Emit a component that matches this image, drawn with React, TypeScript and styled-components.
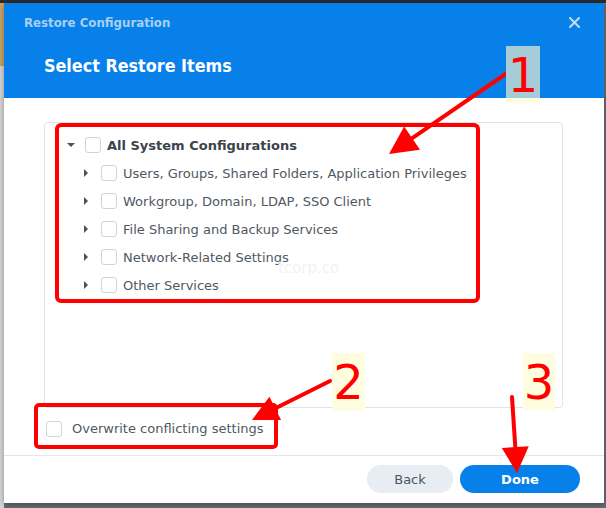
import React from "react";
import styled, { createGlobalStyle } from "styled-components";

const GlobalStyle = createGlobalStyle`
  html, body { margin: 0; padding: 0; }
  body {
    width: 606px;
    height: 508px;
    overflow: hidden;
    background: #4a4d50;
    font-family: "DejaVu Sans", Verdana, sans-serif;
  }
`;

const Page = styled.div`
  position: relative;
  width: 606px;
  height: 508px;
  box-sizing: border-box;
  padding: 3px 2px 5px 4px;
  background:
    linear-gradient(to bottom, #2b2b2b 0 3px, transparent 3px),
    linear-gradient(to right, #c9a464 0 4px, transparent 4px) 0 0 / 100% 66px no-repeat,
    linear-gradient(to right, #d6d6d6 0 4px, #6a7078 4px);
`;

const Dialog = styled.div`
  width: 600px;
  height: 500px;
  background: #ffffff;
  display: flex;
  flex-direction: column;
  box-shadow: 0 2px 6px rgba(0, 0, 0, 0.35);
`;

const Header = styled.div`
  height: 95px;
  background: #0780ea;
  display: flex;
  flex-direction: column;
  padding: 0 24px 0 20px;
`;

const TitleRow = styled.div`
  height: 38px;
  display: flex;
  align-items: center;
  justify-content: space-between;
`;

const Title = styled.div`
  font-family: "DejaVu Sans Condensed", "DejaVu Sans", sans-serif;
  font-stretch: condensed;
  font-weight: bold;
  font-size: 13.1px;
  color: #a8d0f5;
`;

const Close = styled.svg`
  width: 11px;
  height: 11px;
  display: block;
`;

const Heading = styled.div`
  margin-top: 13px;
  padding-left: 20px;
  height: 24px;
  line-height: 24px;
  font-family: "DejaVu Sans Condensed", "DejaVu Sans", sans-serif;
  font-stretch: condensed;
  font-weight: bold;
  font-size: 17.8px;
  color: #ffffff;
`;

const Body = styled.div`
  flex: 1;
  padding: 24px 41px 0 40px;
  display: flex;
  flex-direction: column;
`;

const TreeBox = styled.div`
  position: relative;
  height: 286px;
  box-sizing: border-box;
  border: 1px solid #dfe4ea;
  border-radius: 4px;
  padding-top: 8px;
`;

const Row = styled.div<{ $level: number }>`
  height: 28px;
  display: flex;
  align-items: center;
  padding-left: ${(p) => 19 + p.$level * 16}px;
`;

const CaretBox = styled.div<{ $open: boolean }>`
  width: 21px;
  height: 14px;
  box-sizing: border-box;
  padding-left: ${(p) => (p.$open ? 3 : 4)}px;
  display: flex;
  align-items: center;
`;

const Caret = styled.div<{ $open: boolean }>`
  width: 0;
  height: 0;
  ${(p) =>
    p.$open
      ? `border-left: 4px solid transparent; border-right: 4px solid transparent; border-top: 4px solid #4a525b;`
      : `border-top: 4px solid transparent; border-bottom: 4px solid transparent; border-left: 4px solid #4a525b;`}
`;

const Check = styled.div`
  width: 16px;
  height: 16px;
  box-sizing: border-box;
  border: 1px solid #cdd4dc;
  border-radius: 3px;
  background: #fff;
  flex-shrink: 0;
`;

const Label = styled.span<{ $bold?: boolean }>`
  margin-left: 6px;
  font-size: 13px;
  font-weight: ${(p) => (p.$bold ? "bold" : "normal")};
  color: ${(p) => (p.$bold ? "#3b434c" : "#4f5862")};
  white-space: nowrap;
`;

const Watermark = styled.div`
  position: absolute;
  left: 233px;
  top: 136px;
  font-family: "DejaVu Sans", sans-serif;
  font-size: 15px;
  color: #f2f2f2;
`;

const OptionRow = styled.div`
  margin-top: 12px;
  padding-left: 2px;
  height: 17px;
  display: flex;
  align-items: center;
`;

const OptionLabel = styled.span`
  margin-left: 10px;
  font-size: 13px;
  color: #4f5862;
`;

const Footer = styled.div`
  border-top: 1px solid #e2e6ea;
  padding: 9px 24px 10px 0;
  display: flex;
  justify-content: flex-end;
  gap: 7px;
`;

const Button = styled.button<{ $primary?: boolean }>`
  height: 28px;
  width: ${(p) => (p.$primary ? 120 : 86)}px;
  border: none;
  border-radius: 14px;
  background: ${(p) => (p.$primary ? "#0780ea" : "#e8edf3")};
  color: ${(p) => (p.$primary ? "#ffffff" : "#4a5560")};
  font-family: "DejaVu Sans", sans-serif;
  font-size: 13px;
  font-weight: ${(p) => (p.$primary ? "bold" : "normal")};
  padding: 0;
`;

const Overlay = styled.svg`
  position: absolute;
  left: 0;
  top: 0;
  width: 606px;
  height: 508px;
  pointer-events: none;
`;

const Tag = styled.div<{ $x: number; $y: number; $w: number; $h: number; $split?: number }>`
  position: absolute;
  left: ${(p) => p.$x}px;
  top: ${(p) => p.$y}px;
  width: ${(p) => p.$w}px;
  height: ${(p) => p.$h}px;
  background: ${(p) =>
    p.$split
      ? `linear-gradient(to bottom, #a6ccd8 0 ${p.$split}px, #fffde0 ${p.$split}px)`
      : "#fffde0"};
  display: flex;
  align-items: center;
  justify-content: center;
  font-family: "DejaVu Sans", sans-serif;
  font-weight: normal;
  font-size: 48px;
  line-height: 1;
  color: #ff0000;
`;

type Pt = [number, number];

function Arrow({ from, to, head = 26, width = 27 }: { from: Pt; to: Pt; head?: number; width?: number }) {
  const dx = to[0] - from[0];
  const dy = to[1] - from[1];
  const len = Math.hypot(dx, dy);
  const ux = dx / len;
  const uy = dy / len;
  const bx = to[0] - ux * head;
  const by = to[1] - uy * head;
  const px = -uy * (width / 2);
  const py = ux * (width / 2);
  const pts = `${to[0]},${to[1]} ${bx + px},${by + py} ${bx - px},${by - py}`;
  return (
    <g>
      <line x1={from[0]} y1={from[1]} x2={bx + ux * 2} y2={by + uy * 2} stroke="#ff0000" strokeWidth={4} strokeLinecap="round" />
      <polygon points={pts} fill="#ff0000" />
    </g>
  );
}

const items = [
  "Users, Groups, Shared Folders, Application Privileges",
  "Workgroup, Domain, LDAP, SSO Client",
  "File Sharing and Backup Services",
  "Network-Related Settings",
  "Other Services",
];

export default function App() {
  return (
    <>
      <GlobalStyle />
      <Page>
        <Dialog>
          <Header>
            <TitleRow>
              <Title>Restore Configuration</Title>
              <Close viewBox="0 0 11 11">
                <path d="M1 1 L10 10 M10 1 L1 10" stroke="#c4dcf3" strokeWidth="2" strokeLinecap="round" />
              </Close>
            </TitleRow>
            <Heading>Select Restore Items</Heading>
          </Header>
          <Body>
            <TreeBox>
              <Row $level={0}>
                <CaretBox $open>
                  <Caret $open />
                </CaretBox>
                <Check />
                <Label $bold>All System Configurations</Label>
              </Row>
              {items.map((t) => (
                <Row $level={1} key={t}>
                  <CaretBox $open={false}>
                    <Caret $open={false} />
                  </CaretBox>
                  <Check />
                  <Label>{t}</Label>
                </Row>
              ))}
              <Watermark>tcorp.co</Watermark>
            </TreeBox>
            <OptionRow>
              <Check />
              <OptionLabel>Overwrite conflicting settings</OptionLabel>
            </OptionRow>
          </Body>
          <Footer>
            <Button>Back</Button>
            <Button $primary>Done</Button>
          </Footer>
        </Dialog>
        <Overlay viewBox="0 0 606 508">
          <rect x={57} y={125} width={421} height={176} rx={4} fill="none" stroke="#ff0000" strokeWidth={4} />
          <rect x={36} y={405} width={240} height={42} rx={3} fill="none" stroke="#ff0000" strokeWidth={4} />
          <Arrow from={[507, 73]} to={[389, 154]} head={28} width={28} />
          <Arrow from={[330, 381]} to={[252, 420]} head={26} width={26} />
          <Arrow from={[512, 397]} to={[517, 473]} head={26} width={27} />
        </Overlay>
        <Tag $x={506} $y={46} $w={34} $h={57} $split={52}>1</Tag>
        <Tag $x={332} $y={353} $w={33} $h={58}>2</Tag>
        <Tag $x={523} $y={353} $w={32} $h={57}>3</Tag>
      </Page>
    </>
  );
}
